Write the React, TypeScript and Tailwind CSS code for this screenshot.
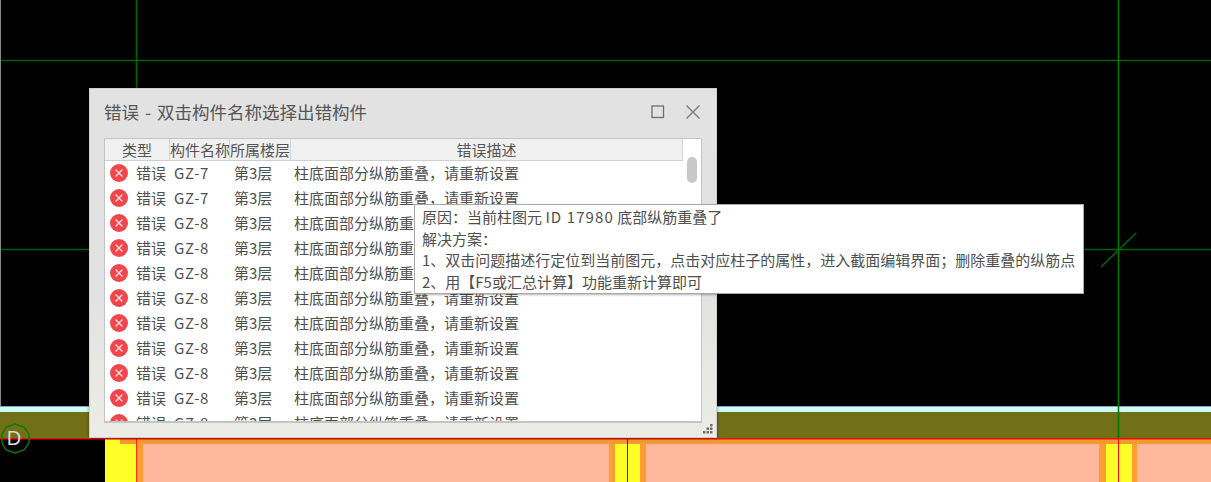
const rows = [
  'GZ-7', 'GZ-7', 'GZ-8', 'GZ-8', 'GZ-8', 'GZ-8', 'GZ-8', 'GZ-8', 'GZ-8', 'GZ-8', 'GZ-8',
]

// the CAD drawing behind the dialog
function Canvas() {
  return (
    <svg className="absolute inset-0" width="1211" height="482" viewBox="0 0 1211 482">
      <rect x="0" y="0" width="1" height="406" fill="#8a8a8a" />
      <rect x="0" y="406" width="1211" height="1" fill="#8fa5a5" />
      <rect x="0" y="407" width="1211" height="5" fill="#ccfbfb" />
      <rect x="0" y="412" width="1211" height="26" fill="#716f17" />
      <rect x="105" y="439" width="1106" height="43" fill="#ffb89c" />
      <rect x="120" y="439" width="1091" height="5" fill="#f09a30" />
      <rect x="105" y="439" width="15" height="5" fill="#ffff28" />
      {/* column strips */}
      <rect x="105" y="444" width="31" height="38" fill="#ffff28" />
      <rect x="136" y="439" width="7" height="43" fill="#ff9d33" />
      <rect x="609" y="444" width="37" height="38" fill="#ff9d33" />
      <rect x="615" y="444" width="25" height="38" fill="#ffff28" />
      <rect x="1099" y="444" width="38" height="38" fill="#ff9d33" />
      <rect x="1106" y="444" width="26" height="38" fill="#ffff28" />
      <rect x="627" y="439" width="1" height="43" fill="#7a1a00" />
      <rect x="136" y="439" width="1" height="43" fill="#ff2a00" />
      <rect x="1118" y="438" width="1" height="44" fill="#ff0000" />
      <rect x="0" y="438" width="1211" height="1.5" fill="#e81000" />
      {/* axis lines */}
      <g stroke="#006400" strokeWidth="1.6" fill="none">
        <path d="M1 60.5H1211" />
        <path d="M1 249.5H1211" />
        <path d="M136.5 0V90" />
      </g>
      <path d="M1118.5 0V438" stroke="#007a00" strokeWidth="1.6" />
      <path d="M1101 267L1136 233" stroke="#006400" strokeWidth="1.6" />
      <polygon
        points="15,424 24,427 29,434 29,443 24,450 15,453 6,450 2,443 2,434 6,427"
        fill="none"
        stroke="#0a7a0a"
        strokeWidth="1.4"
      />
      <text x="14" y="445" textAnchor="middle" fontSize="20" fill="#d8d8d8" fontFamily="'Liberation Sans', sans-serif">
        D
      </text>
    </svg>
  )
}

function ErrorIcon() {
  return (
    <svg width="18" height="18" viewBox="0 0 18 18" className="shrink-0">
      <circle cx="9" cy="9" r="9" fill="#f2464c" />
      <path d="M5.6 5.6L12.4 12.4M12.4 5.6L5.6 12.4" stroke="#ffd9da" strokeWidth="1.4" />
    </svg>
  )
}

function Dialog() {
  return (
    <div className="absolute left-[89px] top-[88px] w-[628px] h-[350px] flex flex-col bg-gradient-to-b from-[#e2e2e2] from-60% to-[#ecece6] border border-[#cfcfcf] shadow-[0_0_3px_rgba(0,0,0,0.4)]">
      {/* title bar */}
      <div className="h-[49px] shrink-0 flex items-center pl-[14px] pr-[15px] text-[17.5px] text-[#565656]">
        <span className="flex-1 mt-[-2px] [word-spacing:2px]">错误 - 双击构件名称选择出错构件</span>
        <svg width="14" height="14" viewBox="0 0 14 14" className="mr-[20px] mt-[-4px]">
          <rect x="1" y="1" width="11.5" height="11.5" fill="none" stroke="#6e6e6e" strokeWidth="1.3" />
        </svg>
        <svg width="16" height="16" viewBox="0 0 16 16" className="mt-[-3px]">
          <path d="M1.5 1.5L14.5 14.5M14.5 1.5L1.5 14.5" stroke="#7a7a7a" strokeWidth="1.4" />
        </svg>
      </div>

      {/* list */}
      <div className="mx-[14px] w-[598px] h-[285px] shrink-0 flex flex-col bg-white border border-[#c4c4c4] border-b-2 overflow-hidden text-[15px] text-[#4f4f4f]">
        <div className="h-[22px] shrink-0 flex">
          <div className="flex-1 flex h-[22px] bg-[#f0f0f0] border-b border-[#cfcfcf] leading-[21px] text-center text-[#555]">
            <div className="w-[65px] border-r border-[#d6d6d6]">类型</div>
            <div className="w-[60px] border-r border-[#d6d6d6] whitespace-nowrap">构件名称</div>
            <div className="w-[61px] border-r border-[#d6d6d6] whitespace-nowrap">所属楼层</div>
            <div className="flex-1 border-r border-[#d6d6d6]">错误描述</div>
          </div>
          <div className="w-[18px]" />
        </div>
        <div className="flex-1 flex min-h-0">
          <div className="flex-1 min-w-0 mt-[-1px]">
            {rows.map((name, i) => (
              <div key={i} className="h-[25px] flex items-center pl-[5px] whitespace-nowrap">
                <ErrorIcon />
                <div className="flex mt-[1px]">
                  <span className="w-[38px] ml-[8px]">错误</span>
                  <span className="w-[60px] tracking-[0.7px]">{name}</span>
                  <span className="w-[60px]">第3层</span>
                  <span>柱底面部分纵筋重叠，请重新设置</span>
                </div>
              </div>
            ))}
          </div>
          <div className="w-[18px] shrink-0 flex justify-center">
            <div className="w-[10px] h-[26px] mt-[-4px] rounded-full bg-[#c8c8c8]" />
          </div>
        </div>
      </div>

      {/* resize grip */}
      <div className="flex-1 flex justify-end items-end pr-[3px] pb-[3px]">
        <svg width="10" height="10" viewBox="0 0 10 10" fill="#6f6f6f">
          <rect x="7" y="0" width="2.5" height="2.5" />
          <rect x="3.5" y="3.5" width="2.5" height="2.5" />
          <rect x="7" y="3.5" width="2.5" height="2.5" />
          <rect x="0" y="7" width="2.5" height="2.5" />
          <rect x="3.5" y="7" width="2.5" height="2.5" />
          <rect x="7" y="7" width="2.5" height="2.5" />
        </svg>
      </div>
    </div>
  )
}

function Tip() {
  return (
    <div className="absolute left-[414px] top-[204px] w-[670px] h-[90px] bg-white border border-[#a8a8a8] shadow-[1px_1px_2px_rgba(0,0,0,0.3)] pl-[7px] pt-[1px] text-[15px] leading-[21.6px] text-[#4f4f4f] whitespace-nowrap">
      <div>
        原因：当前柱图元 <span className="tracking-[1.1px]">ID 17980</span> 底部纵筋重叠了
      </div>
      <div>解决方案：</div>
      <div>1、双击问题描述行定位到当前图元，点击对应柱子的属性，进入截面编辑界面；删除重叠的纵筋点</div>
      <div>2、用【F5或汇总计算】功能重新计算即可</div>
    </div>
  )
}

export default function App() {
  return (
    <div className="relative w-[1211px] h-[482px] bg-black overflow-hidden font-['Noto_Sans_CJK_SC','Noto_Sans',sans-serif]">
      <Canvas />
      <Dialog />
      <Tip />
    </div>
  )
}
